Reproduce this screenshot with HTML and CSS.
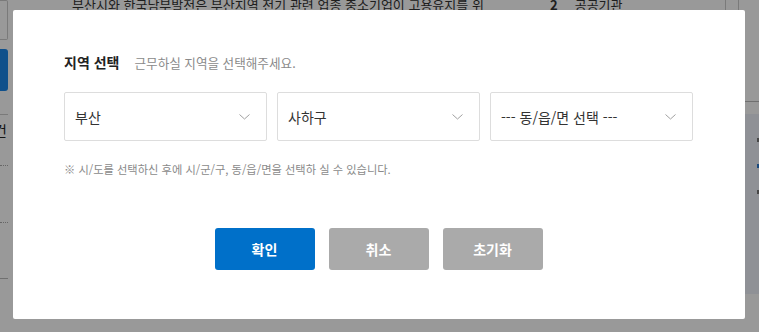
FILE: index.html
```html
<!DOCTYPE html>
<html lang="ko">
<head>
    <meta charset="UTF-8">
    <meta name="viewport" content="width=device-width, initial-scale=1.0">
    <title>지역 선택</title>
    <link rel="stylesheet" href="styles.css">
</head>
<body>
    <!-- page behind the popup -->
    <div class="page">
        <div class="side">
            <div class="side-box"></div>
            <div class="side-btn"></div>
            <div class="side-row">건</div>
            <div class="side-dots"></div>
            <div class="side-dots second"></div>
            <div class="side-line"></div>
        </div>
        <div class="main">
            <div class="news-row">
                <span class="news-text">부산시와 한국남부발전은 부산지역 전기 관련 업종 중소기업이 고용유지를 위</span>
                <span class="news-num">2</span>
                <span class="news-tag">공공기관</span>
                <span class="news-cell"></span>
                <span class="news-cell last"></span>
            </div>
        </div>
        <div class="aside">
            <div class="aside-top"></div>
            <div class="aside-panel">
                <span class="mark"></span>
                <span class="mark blue"></span>
                <span class="mark"></span>
            </div>
        </div>
    </div>

    <div class="dim">
        <div class="popup">
            <div class="popup-head">
                <h2 class="popup-title">지역 선택</h2>
                <p class="popup-desc">근무하실 지역을 선택해주세요.</p>
            </div>

            <div class="selects">
                <div class="select">
                    <span>부산</span>
                    <svg class="arrow" width="11" height="6" viewBox="0 0 11 6"><path d="M0.5 0.5 L5.5 5 L10.5 0.5" fill="none" stroke="#a0a0a0" stroke-width="1"/></svg>
                </div>
                <div class="select">
                    <span>사하구</span>
                    <svg class="arrow" width="11" height="6" viewBox="0 0 11 6"><path d="M0.5 0.5 L5.5 5 L10.5 0.5" fill="none" stroke="#a0a0a0" stroke-width="1"/></svg>
                </div>
                <div class="select">
                    <span>--- 동/읍/면 선택 ---</span>
                    <svg class="arrow" width="11" height="6" viewBox="0 0 11 6"><path d="M0.5 0.5 L5.5 5 L10.5 0.5" fill="none" stroke="#a0a0a0" stroke-width="1"/></svg>
                </div>
            </div>

            <p class="note">※ 시/도를 선택하신 후에 시/군/구, 동/읍/면을 선택하 실 수 있습니다.</p>

            <div class="buttons">
                <button class="btn btn-ok">확인</button>
                <button class="btn">취소</button>
                <button class="btn">초기화</button>
            </div>
        </div>
    </div>
</body>
</html>
```

FILE: styles.css
```css
body {
    margin: 0;
    height: 100vh;
    overflow: hidden;
    background: #fff;
    font-family: "Noto Sans CJK KR", "Noto Sans", sans-serif;
    color: #333;
}

/* background page */
.page {
    display: grid;
    grid-template-columns: 8px 1fr 14px;
    height: 100vh;
}

.side {
    display: flex;
    flex-direction: column;
    overflow: hidden;
}

.side-box {
    height: 40px;
    box-sizing: border-box;
    border: 1px solid #ccc;
    border-left: none;
    border-radius: 0 2px 2px 0;
}

.side-btn {
    margin-top: 9px;
    height: 42px;
    background: #1a86e8;
    border-radius: 0 3px 3px 0;
}

.side-row {
    margin-top: 23px;
    height: 30px;
    border-top: 1px solid #ccc;
    font-size: 14px;
    line-height: 30px;
    text-indent: -6px;
    color: #222;
}

.side-dots {
    margin-top: 20px;
    border-top: 1px dotted #aaa;
}

.side-dots.second {
    margin-top: 56px;
}

.side-line {
    margin-top: 55px;
    border-top: 1px solid #bbb;
}

.main {
    overflow: hidden;
}

.news-row {
    display: flex;
    align-items: center;
    height: 20px;
    margin-top: -6px;
    font-size: 13px;
    white-space: nowrap;
}

.news-text {
    margin-left: 64px;
    width: 478px;
    overflow: hidden;
}

.news-num {
    font-weight: bold;
}

.news-tag {
    margin-left: 17px;
}

.news-cell {
    margin-left: auto;
    align-self: stretch;
    width: 12px;
    border-left: 1px solid #ccc;
}

.news-cell.last {
    margin-left: 0;
    width: 6px;
}

.aside {
    display: flex;
    flex-direction: column;
}

.aside-top {
    height: 101px;
    border-bottom: 1px solid #bbb;
}

.aside-panel {
    margin-top: 12px;
    height: 156px;
    background: #eef2fb;
    display: flex;
    flex-direction: column;
    align-items: flex-end;
    gap: 22px;
    padding-top: 24px;
}

.mark {
    width: 2px;
    height: 4px;
    background: #777;
}

.mark.blue {
    background: #2a7bd0;
}

/* dim layer + popup */
.dim {
    position: fixed;
    inset: 0;
    background: rgba(0, 0, 0, 0.4);
    display: flex;
    padding: 10px 14px 13px 13px;
}

.popup {
    flex: 1;
    background: #fff;
    border-radius: 2px;
    padding: 42px 52px 0 51px;
}

.popup-head {
    display: flex;
    align-items: baseline;
    gap: 15px;
    height: 20px;
}

.popup-title {
    margin: 0;
    font-size: 14px;
    font-weight: bold;
    color: #222;
    line-height: 20px;
}

.popup-desc {
    margin: 0;
    font-size: 12.6px;
    color: #8a8a8a;
    line-height: 20px;
}

.selects {
    display: flex;
    gap: 10px;
    margin-top: 20px;
}

.select {
    width: 203px;
    height: 49px;
    box-sizing: border-box;
    border: 1px solid #ddd;
    border-radius: 2px;
    display: flex;
    align-items: center;
    justify-content: space-between;
    padding: 0 16px 0 10px;
    font-size: 14px;
    color: #333;
}

.arrow {
    margin-top: 1px;
}

.note {
    margin: 20px 0 0;
    font-size: 11.25px;
    line-height: 16px;
    color: #8a8a8a;
}

.buttons {
    display: flex;
    justify-content: center;
    gap: 14px;
    margin-top: 51px;
}

.btn {
    width: 100px;
    height: 42px;
    border: none;
    border-radius: 3px;
    background: #aaa;
    color: #fff;
    font-family: inherit;
    font-size: 14px;
    font-weight: bold;
}

.btn-ok {
    background: #0070c9;
}
```
